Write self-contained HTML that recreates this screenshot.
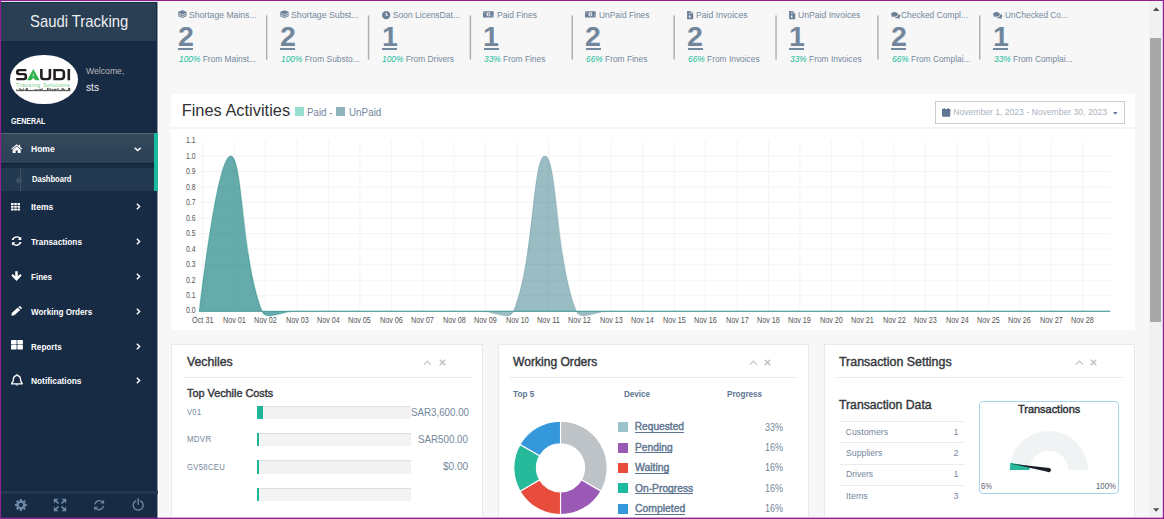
<!DOCTYPE html>
<html><head><meta charset="utf-8"><title>Saudi Tracking</title><style>
html,body{margin:0;padding:0;}
body{width:1164px;height:519px;overflow:hidden;position:relative;font-family:"Liberation Sans",sans-serif;background:#F7F7F7;}
.t{position:absolute;white-space:nowrap;display:block;}
.i{position:absolute;display:block;overflow:visible;}
#frame{position:absolute;left:0;top:0;width:1164px;height:519px;}
#content{position:absolute;left:1px;top:1px;width:1162px;height:517px;background:#F7F7F7;}
#sb{position:absolute;left:1px;top:1px;width:156px;height:517px;}
i{font-style:italic;}
</style></head>
<body>
<div id="frame" style="background:#8F1F93"></div>
<div id="content"></div>
<div id="sb" style="background:#172B44"></div>
<div style="position:absolute;left:1px;top:1px;width:157px;height:1px;background:#DCE3E1"></div>
<div style="position:absolute;left:158px;top:1px;width:1005px;height:1px;background:#F5F8F5"></div>
<div style="position:absolute;left:1px;top:2px;width:156px;height:1px;background:#1D3148"></div>
<div style="position:absolute;left:1px;top:3px;width:155px;height:38px;background:#2A3F54"></div>
<div style="position:absolute;left:157px;top:2px;width:1px;height:516px;background:#8A96A3"></div>
<div style="position:absolute;left:158px;top:2px;width:1px;height:516px;background:#FFFFFF"></div>
<span id="t0" class="t" style="left:30.30px;transform-origin:0 50%;top:14.25px;font-size:15.7px;line-height:15.7px;font-weight:400;color:#ECF0F1;transform:scaleX(0.9462);">Saudi Tracking</span>
<div style="position:absolute;left:9.8px;top:54.6px;width:67.8px;height:49.8px;border-radius:50%;background:#fff"></div>
<svg class="i" style="left:16.10px;top:68.60px" width="54.1" height="11.3" viewBox="0 0 104.5 23" fill="#231F20" preserveAspectRatio="none"><path d="M20 0 H6 C2 0 0 2 0 5.5 V7 C0 10.5 2 12.7 6 12.7 H15 C16 12.7 16.5 13.2 16.5 14.2 V16.5 C16.5 17.6 16 18.3 15 18.3 H0.5 V23 H15.5 C19.5 23 21.5 20.8 21.5 17.3 V14 C21.5 10.5 19.5 8.3 15.5 8.3 H6.5 C5.5 8.3 5 7.8 5 6.8 V6.2 C5 5.2 5.5 4.7 6.5 4.7 H20 Z" fill="#231F20"/><path d="M33.5 0 L45.5 23 H38.2 L33.5 18.2 L28.8 23 H21.5 Z" fill="#2DB24A"/><path d="M33.5 7 L35.6 15.5 H31.4 Z" fill="#fff" opacity=".55"/><path d="M46.5 0 H51.5 V15.5 C51.5 17.5 52.5 18.3 54.5 18.3 H60 C62 18.3 63 17.5 63 15.5 V0 H68 V16.5 C68 20.8 65.5 23 61 23 H53.5 C49 23 46.5 20.8 46.5 16.5 Z" fill="#231F20"/><path d="M72 0 H87 C92 0 95 2.8 95 7.5 V15.5 C95 20.2 92 23 87 23 H72 Z M77 4.7 V18.3 H86.5 C88.8 18.3 90 17.2 90 15 V8 C90 5.8 88.8 4.7 86.5 4.7 Z" fill="#231F20" fill-rule="evenodd"/><rect x="99.5" y="0" width="5" height="23" fill="#231F20"/></svg><span id="t39" class="t" style="left:16.10px;transform-origin:0 50%;top:83.70px;font-size:4.8px;line-height:4.8px;font-weight:400;color:#6CCB7A;transform:scaleX(1.1202);letter-spacing:0.5px;">Tracking Solutions</span><svg class="i" style="left:0;top:0" width="160" height="120" viewBox="0 0 160 120" fill="#2b2b2b" opacity=".8"><rect x="16.3" y="89.9" width="53.8" height="0.9"/><rect x="16.30" y="89.40" width="1.20" height="1.80"/><rect x="18.40" y="90.00" width="0.70" height="1.20"/><rect x="19.35" y="87.90" width="1.20" height="3.30"/><rect x="20.80" y="89.40" width="2.20" height="1.80"/><rect x="23.25" y="88.20" width="0.70" height="3.00"/><rect x="24.85" y="89.40" width="0.70" height="1.80"/><rect x="25.80" y="88.20" width="2.20" height="3.00"/><rect x="28.25" y="90.00" width="2.20" height="1.20"/><rect x="30.80" y="90.00" width="2.20" height="1.20"/><rect x="33.90" y="89.40" width="0.70" height="1.80"/><rect x="34.85" y="89.40" width="2.20" height="1.80"/><rect x="37.55" y="89.40" width="1.60" height="1.80"/><rect x="39.40" y="88.80" width="2.20" height="2.40"/><rect x="41.95" y="87.90" width="0.70" height="3.30"/><rect x="43.00" y="90.00" width="1.20" height="1.20"/><rect x="44.45" y="90.00" width="2.20" height="1.20"/><rect x="47.00" y="87.90" width="1.60" height="3.30"/><rect x="49.50" y="88.20" width="1.20" height="3.00"/><rect x="51.60" y="88.80" width="1.20" height="2.40"/><rect x="53.15" y="89.40" width="0.90" height="1.80"/><rect x="54.30" y="88.80" width="2.20" height="2.40"/><rect x="57.40" y="88.20" width="1.20" height="3.00"/><rect x="59.10" y="90.00" width="2.20" height="1.20"/><rect x="61.55" y="88.20" width="2.20" height="3.00"/><rect x="64.10" y="89.40" width="1.20" height="1.80"/><rect x="66.20" y="90.00" width="1.60" height="1.20"/><rect x="68.05" y="87.90" width="2.20" height="3.30"/></svg>
<span id="t1" class="t" style="left:86.10px;transform-origin:0 50%;top:66.05px;font-size:9.5px;line-height:9.5px;font-weight:400;color:#BAB8B8;transform:scaleX(0.9105);">Welcome,</span>
<span id="t2" class="t" style="left:86.10px;transform-origin:0 50%;top:82.15px;font-size:10.5px;line-height:10.5px;font-weight:400;color:#ECF0F1;transform:scaleX(0.9686);">sts</span>
<span id="t3" class="t" style="left:11.30px;transform-origin:0 50%;top:117.60px;font-size:8.2px;line-height:8.2px;font-weight:700;color:#fff;transform:scaleX(0.8568);">GENERAL</span>
<div style="position:absolute;left:1px;top:132.7px;width:153px;height:30.3px;background:linear-gradient(#36495B,#2C4157);box-shadow:0 1px 0 rgba(0,0,0,.25), inset 0 1px 0 rgba(255,255,255,.16)"></div>
<div style="position:absolute;left:1px;top:167.8px;width:153px;height:23.7px;background:#23394F"></div>
<div style="position:absolute;left:154px;top:132.7px;width:3.5px;height:58.8px;background:#1ABB9C"></div>
<div style="position:absolute;left:19.8px;top:167.8px;width:1px;height:23.7px;background:#3D5166"></div>
<div style="position:absolute;left:16.3px;top:178px;width:5.4px;height:5.4px;border-radius:50%;background:#3D5166"></div>
<svg class="i" style="left:10.70px;top:143.60px" width="11.4" height="9.0" viewBox="0 0 16 13" fill="#fff" preserveAspectRatio="none"><path d="M8 0.3 L0.2 6.9 L1.2 8.1 L8 2.4 L14.8 8.1 L15.8 6.9 L12.9 4.4 V1 H11 V2.8 Z"/><path d="M8 3.6 L2.4 8.3 V13 H6.5 V9.4 H9.5 V13 H13.6 V8.3 Z"/></svg>
<span id="t4" class="t" style="left:31.20px;transform-origin:0 50%;top:144.60px;font-size:9px;line-height:9px;font-weight:700;color:#fff;transform:scaleX(0.9474);">Home</span>
<svg class="i" style="left:134.30px;top:146.90px" width="7.4" height="4.8" viewBox="0 0 10 7" fill="#fff" preserveAspectRatio="none"><path d="M1 1.2 L5 5.2 L9 1.2" fill="none" stroke="#fff" stroke-width="2"/></svg>
<span id="t5" class="t" style="left:31.50px;transform-origin:0 50%;top:175.30px;font-size:9px;line-height:9px;font-weight:700;color:#fff;transform:scaleX(0.8401);">Dashboard</span>
<svg class="i" style="left:10.60px;top:203.00px" width="9.2" height="7.7" viewBox="0 0 14 12" fill="#fff" preserveAspectRatio="none"><rect x="0.0" y="0.0" width="4" height="3.3" rx="0.5"/><rect x="4.9" y="0.0" width="4" height="3.3" rx="0.5"/><rect x="9.8" y="0.0" width="4" height="3.3" rx="0.5"/><rect x="0.0" y="4.2" width="4" height="3.3" rx="0.5"/><rect x="4.9" y="4.2" width="4" height="3.3" rx="0.5"/><rect x="9.8" y="4.2" width="4" height="3.3" rx="0.5"/><rect x="0.0" y="8.4" width="4" height="3.3" rx="0.5"/><rect x="4.9" y="8.4" width="4" height="3.3" rx="0.5"/><rect x="9.8" y="8.4" width="4" height="3.3" rx="0.5"/></svg>
<span id="t6" class="t" style="left:31.20px;transform-origin:0 50%;top:203.30px;font-size:9px;line-height:9px;font-weight:700;color:#fff;transform:scaleX(0.9441);">Items</span>
<svg class="i" style="left:135.80px;top:203.40px" width="4.9" height="7" viewBox="0 0 7 10" fill="#fff" preserveAspectRatio="none"><path d="M1.2 1 L5.2 5 L1.2 9" fill="none" stroke="#fff" stroke-width="2"/></svg>
<svg class="i" style="left:10.60px;top:235.60px" width="11.2" height="10.2" viewBox="0 0 14 14" fill="#fff" preserveAspectRatio="none"><path d="M12.9 1 V5.4 H8.5 L10.2 3.7 A3.9 3.9 0 0 0 3.3 5.6 H0.8 A6.4 6.4 0 0 1 11.7 2.2 Z"/><path d="M1.1 13 V8.6 H5.5 L3.8 10.3 A3.9 3.9 0 0 0 10.7 8.4 H13.2 A6.4 6.4 0 0 1 2.3 11.8 Z"/></svg>
<span id="t7" class="t" style="left:31.20px;transform-origin:0 50%;top:238.00px;font-size:9px;line-height:9px;font-weight:700;color:#fff;transform:scaleX(0.9184);">Transactions</span>
<svg class="i" style="left:135.80px;top:238.10px" width="4.9" height="7" viewBox="0 0 7 10" fill="#fff" preserveAspectRatio="none"><path d="M1.2 1 L5.2 5 L1.2 9" fill="none" stroke="#fff" stroke-width="2"/></svg>
<svg class="i" style="left:11.20px;top:270.90px" width="11" height="10.4" viewBox="0 0 14 13" fill="#fff" preserveAspectRatio="none"><path d="M5.4 0.4 H8.6 V6.6 L11.6 3.7 L13.6 5.7 L7 12.6 L0.4 5.7 L2.4 3.7 L5.4 6.6 Z"/></svg>
<span id="t8" class="t" style="left:31.20px;transform-origin:0 50%;top:272.80px;font-size:9px;line-height:9px;font-weight:700;color:#fff;transform:scaleX(0.8930);">Fines</span>
<svg class="i" style="left:135.80px;top:272.90px" width="4.9" height="7" viewBox="0 0 7 10" fill="#fff" preserveAspectRatio="none"><path d="M1.2 1 L5.2 5 L1.2 9" fill="none" stroke="#fff" stroke-width="2"/></svg>
<svg class="i" style="left:10.60px;top:305.50px" width="11" height="10.1" viewBox="0 0 14 14" fill="#fff" preserveAspectRatio="none"><path d="M0.5 13.5 L1 9.8 L8.6 2.2 L11.8 5.4 L4.2 13 Z M9.5 1.3 L10.4 0.4 A1 1 0 0 1 11.8 0.4 L13.6 2.2 A1 1 0 0 1 13.6 3.6 L12.7 4.5 Z"/></svg>
<span id="t9" class="t" style="left:31.20px;transform-origin:0 50%;top:307.60px;font-size:9px;line-height:9px;font-weight:700;color:#fff;transform:scaleX(0.9033);">Working Orders</span>
<svg class="i" style="left:135.80px;top:307.70px" width="4.9" height="7" viewBox="0 0 7 10" fill="#fff" preserveAspectRatio="none"><path d="M1.2 1 L5.2 5 L1.2 9" fill="none" stroke="#fff" stroke-width="2"/></svg>
<svg class="i" style="left:10.60px;top:340.00px" width="12.1" height="9.7" viewBox="0 0 14 12" fill="#fff" preserveAspectRatio="none"><rect x="0.0" y="0.0" width="6.5" height="5.5" rx="0.5"/><rect x="7.3" y="0.0" width="6.5" height="5.5" rx="0.5"/><rect x="0.0" y="6.3" width="6.5" height="5.5" rx="0.5"/><rect x="7.3" y="6.3" width="6.5" height="5.5" rx="0.5"/></svg>
<span id="t10" class="t" style="left:31.20px;transform-origin:0 50%;top:342.50px;font-size:9px;line-height:9px;font-weight:700;color:#fff;transform:scaleX(0.9025);">Reports</span>
<svg class="i" style="left:135.80px;top:342.60px" width="4.9" height="7" viewBox="0 0 7 10" fill="#fff" preserveAspectRatio="none"><path d="M1.2 1 L5.2 5 L1.2 9" fill="none" stroke="#fff" stroke-width="2"/></svg>
<svg class="i" style="left:11.20px;top:374.10px" width="11.9" height="12.2" viewBox="0 0 14 15" fill="#fff" preserveAspectRatio="none"><path d="M7 1 C7.6 1 7.9 1.4 7.9 1.9 C10.2 2.4 11.2 4.3 11.2 6.5 C11.2 9.3 12 10.6 13.2 11.6 V12.2 H0.8 V11.6 C2 10.6 2.8 9.3 2.8 6.5 C2.8 4.3 3.8 2.4 6.1 1.9 C6.1 1.4 6.4 1 7 1 Z" fill="none" stroke="#fff" stroke-width="1.6" stroke-linejoin="round"/><path d="M5.2 13 A1.9 1.9 0 0 0 8.8 13 Z"/></svg>
<span id="t11" class="t" style="left:31.20px;transform-origin:0 50%;top:377.30px;font-size:9px;line-height:9px;font-weight:700;color:#fff;transform:scaleX(0.9263);">Notifications</span>
<svg class="i" style="left:135.80px;top:377.40px" width="4.9" height="7" viewBox="0 0 7 10" fill="#fff" preserveAspectRatio="none"><path d="M1.2 1 L5.2 5 L1.2 9" fill="none" stroke="#fff" stroke-width="2"/></svg>
<div style="position:absolute;left:1px;top:491px;width:156.5px;height:3px;background:#22384F"></div>
<svg class="i" style="left:0;top:0" width="160" height="519" viewBox="0 0 160 519"><path fill-rule="evenodd" fill="#6F8AA8" d="M26.81,503.98 L26.81,506.02 L25.18,506.18 L24.76,507.19 L25.80,508.46 L24.36,509.90 L23.09,508.86 L22.08,509.28 L21.92,510.91 L19.88,510.91 L19.72,509.28 L18.71,508.86 L17.44,509.90 L16.00,508.46 L17.04,507.19 L16.62,506.18 L14.99,506.02 L14.99,503.98 L16.62,503.82 L17.04,502.81 L16.00,501.54 L17.44,500.10 L18.71,501.14 L19.72,500.72 L19.88,499.09 L21.92,499.09 L22.08,500.72 L23.09,501.14 L24.36,500.10 L25.80,501.54 L24.76,502.81 L25.18,503.82 Z M23.06,505.0 A2.16,2.16 0 1 0 18.74,505.0 A2.16,2.16 0 1 0 23.06,505.0 Z"/></svg><svg class="i" style="left:0;top:0" width="160" height="519" viewBox="0 0 160 519"><path d="M53.8,498.8 L58.4,498.8 L53.8,503.40000000000003 Z" fill="#6F8AA8"/><path d="M55.0,500.0 L58.5,503.5" stroke="#6F8AA8" stroke-width="1.7"/><path d="M66.2,498.8 L61.6,498.8 L66.2,503.40000000000003 Z" fill="#6F8AA8"/><path d="M65.0,500.0 L61.5,503.5" stroke="#6F8AA8" stroke-width="1.7"/><path d="M53.8,511.2 L58.4,511.2 L53.8,506.59999999999997 Z" fill="#6F8AA8"/><path d="M55.0,510.0 L58.5,506.5" stroke="#6F8AA8" stroke-width="1.7"/><path d="M66.2,511.2 L61.6,511.2 L66.2,506.59999999999997 Z" fill="#6F8AA8"/><path d="M65.0,510.0 L61.5,506.5" stroke="#6F8AA8" stroke-width="1.7"/></svg><svg class="i" style="left:93.00px;top:498.80px" width="12.4" height="12.4" viewBox="0 0 14 14" fill="#6F8AA8" ><path d="M2.2 6.2 A4.9 4.9 0 0 1 10.6 3.4" fill="none" stroke="#6F8AA8" stroke-width="1.5"/><path d="M12.6 0.9 V5.2 H8.3 Z"/><path d="M11.8 7.8 A4.9 4.9 0 0 1 3.4 10.6" fill="none" stroke="#6F8AA8" stroke-width="1.5"/><path d="M1.4 13.1 V8.8 H5.7 Z"/></svg><svg class="i" style="left:132.20px;top:498.40px" width="12.4" height="12.8" viewBox="0 0 14 14.5" fill="#6F8AA8" ><path d="M4.3 3.2 A5.6 5.6 0 1 0 9.7 3.2" fill="none" stroke="#6F8AA8" stroke-width="1.5" stroke-linecap="round"/><path d="M7 0.8 V7" stroke="#6F8AA8" stroke-width="1.6" stroke-linecap="round"/></svg>
<svg class="i" style="left:177.80px;top:10.30px" width="8.8" height="8.2" viewBox="0 0 18 16" fill="#6B7F96" ><path d="M9 0 L17.5 3.2 V12.6 L9 16 L0.5 12.6 V3.2 Z"/><path d="M1.5 6.6 L9 9.2 L16.5 6.6 M1.5 10.4 L9 13 L16.5 10.4" stroke="#F7F7F7" stroke-width="1.3" fill="none"/></svg>
<span id="t12" class="t" style="left:189.00px;transform-origin:0 50%;top:10.75px;font-size:8.5px;line-height:8.5px;font-weight:400;color:#73879C;transform:scaleX(1.0146);">Shortage Mains...</span>
<span id="t13" class="t" style="left:177.80px;transform-origin:0 50%;top:23.20px;font-size:28px;line-height:28px;font-weight:700;color:#73879C;transform:scaleX(1.0207);">2</span>
<div style="position:absolute;left:178.20px;top:48.2px;width:15px;height:1.9px;background:#73879C"></div>
<span id="t14" class="t" style="left:178.70px;transform-origin:0 50%;top:55.45px;font-size:8.5px;line-height:8.5px;font-weight:400;color:#73879C;transform:scaleX(.984);transform-origin:0 50%;"><i style="color:#1ABB9C">100%</i> From Mainst...</span>
<svg class="i" style="left:0;top:0" width="1164" height="70" viewBox="0 0 1164 70"><rect x="265.97" y="15.4" width="1.4" height="44.2" fill="#A9AEB2"/></svg>
<svg class="i" style="left:279.67px;top:10.30px" width="8.8" height="8.2" viewBox="0 0 18 16" fill="#6B7F96" ><path d="M9 0 L17.5 3.2 V12.6 L9 16 L0.5 12.6 V3.2 Z"/><path d="M1.5 6.6 L9 9.2 L16.5 6.6 M1.5 10.4 L9 13 L16.5 10.4" stroke="#F7F7F7" stroke-width="1.3" fill="none"/></svg>
<span id="t15" class="t" style="left:290.87px;transform-origin:0 50%;top:10.75px;font-size:8.5px;line-height:8.5px;font-weight:400;color:#73879C;transform:scaleX(1.0291);">Shortage Subst...</span>
<span id="t16" class="t" style="left:279.67px;transform-origin:0 50%;top:23.20px;font-size:28px;line-height:28px;font-weight:700;color:#73879C;transform:scaleX(1.0207);">2</span>
<div style="position:absolute;left:280.07px;top:48.2px;width:15px;height:1.9px;background:#73879C"></div>
<span id="t17" class="t" style="left:280.57px;transform-origin:0 50%;top:55.45px;font-size:8.5px;line-height:8.5px;font-weight:400;color:#73879C;transform:scaleX(.984);transform-origin:0 50%;"><i style="color:#1ABB9C">100%</i> From Substo...</span>
<svg class="i" style="left:0;top:0" width="1164" height="70" viewBox="0 0 1164 70"><rect x="367.84" y="15.4" width="1.4" height="44.2" fill="#A9AEB2"/></svg>
<svg class="i" style="left:381.84px;top:10.50px" width="8.3" height="8.3" viewBox="0 0 16 16" fill="#6B7F96" ><circle cx="8" cy="8" r="8"/><path d="M8 3.2 V8.4 H11.4" stroke="#F7F7F7" stroke-width="1.9" fill="none"/></svg>
<span id="t18" class="t" style="left:392.84px;transform-origin:0 50%;top:10.75px;font-size:8.5px;line-height:8.5px;font-weight:400;color:#73879C;">Soon LicensDat...</span>
<span id="t19" class="t" style="left:381.54px;transform-origin:0 50%;top:23.20px;font-size:28px;line-height:28px;font-weight:700;color:#73879C;transform:scaleX(1.0207);">1</span>
<div style="position:absolute;left:381.94px;top:48.2px;width:15px;height:1.9px;background:#73879C"></div>
<span id="t20" class="t" style="left:382.44px;transform-origin:0 50%;top:55.45px;font-size:8.5px;line-height:8.5px;font-weight:400;color:#73879C;transform:scaleX(.984);transform-origin:0 50%;"><i style="color:#1ABB9C">100%</i> From Drivers</span>
<svg class="i" style="left:0;top:0" width="1164" height="70" viewBox="0 0 1164 70"><rect x="469.71" y="15.4" width="1.4" height="44.2" fill="#A9AEB2"/></svg>
<svg class="i" style="left:483.21px;top:11.40px" width="10.7" height="6.6" viewBox="0 0 22 13" fill="#6B7F96" ><rect x="0" y="0" width="22" height="13" rx="1"/><ellipse cx="11" cy="6.5" rx="4" ry="4.6" fill="#F7F7F7" opacity=".85"/><rect x="10.2" y="3.6" width="1.7" height="5.8" fill="#6B7F96"/><circle cx="3" cy="3" r="1.6" fill="#F7F7F7" opacity=".5"/><circle cx="19" cy="10" r="1.6" fill="#F7F7F7" opacity=".5"/></svg>
<span id="t21" class="t" style="left:497.11px;transform-origin:0 50%;top:10.75px;font-size:8.5px;line-height:8.5px;font-weight:400;color:#73879C;transform:scaleX(0.9957);">Paid Fines</span>
<span id="t22" class="t" style="left:483.41px;transform-origin:0 50%;top:23.20px;font-size:28px;line-height:28px;font-weight:700;color:#73879C;transform:scaleX(1.0207);">1</span>
<div style="position:absolute;left:483.81px;top:48.2px;width:15px;height:1.9px;background:#73879C"></div>
<span id="t23" class="t" style="left:484.31px;transform-origin:0 50%;top:55.45px;font-size:8.5px;line-height:8.5px;font-weight:400;color:#73879C;transform:scaleX(.984);transform-origin:0 50%;"><i style="color:#1ABB9C">33%</i> From Fines</span>
<svg class="i" style="left:0;top:0" width="1164" height="70" viewBox="0 0 1164 70"><rect x="571.58" y="15.4" width="1.4" height="44.2" fill="#A9AEB2"/></svg>
<svg class="i" style="left:585.08px;top:11.40px" width="10.7" height="6.6" viewBox="0 0 22 13" fill="#6B7F96" ><rect x="0" y="0" width="22" height="13" rx="1"/><ellipse cx="11" cy="6.5" rx="4" ry="4.6" fill="#F7F7F7" opacity=".85"/><rect x="10.2" y="3.6" width="1.7" height="5.8" fill="#6B7F96"/><circle cx="3" cy="3" r="1.6" fill="#F7F7F7" opacity=".5"/><circle cx="19" cy="10" r="1.6" fill="#F7F7F7" opacity=".5"/></svg>
<span id="t24" class="t" style="left:598.98px;transform-origin:0 50%;top:10.75px;font-size:8.5px;line-height:8.5px;font-weight:400;color:#73879C;transform:scaleX(0.9896);">UnPaid Fines</span>
<span id="t25" class="t" style="left:585.28px;transform-origin:0 50%;top:23.20px;font-size:28px;line-height:28px;font-weight:700;color:#73879C;transform:scaleX(1.0207);">2</span>
<div style="position:absolute;left:585.68px;top:48.2px;width:15px;height:1.9px;background:#73879C"></div>
<span id="t26" class="t" style="left:586.18px;transform-origin:0 50%;top:55.45px;font-size:8.5px;line-height:8.5px;font-weight:400;color:#73879C;transform:scaleX(.984);transform-origin:0 50%;"><i style="color:#1ABB9C">66%</i> From Fines</span>
<svg class="i" style="left:0;top:0" width="1164" height="70" viewBox="0 0 1164 70"><rect x="673.45" y="15.4" width="1.4" height="44.2" fill="#A9AEB2"/></svg>
<svg class="i" style="left:687.10px;top:10.50px" width="6.3" height="8.2" viewBox="0 0 12 16" fill="#6B7F96" ><path d="M0 0 H7.5 L12 4.5 V16 H0 Z"/><path d="M7.6 0 V4.4 H12" fill="none" stroke="#F7F7F7" stroke-width="1"/><path d="M5 2 V10" stroke="#F7F7F7" stroke-width="1.6" stroke-dasharray="1.5 1.2"/><rect x="3.6" y="9.5" width="3" height="3.6" fill="#F7F7F7"/></svg>
<span id="t27" class="t" style="left:696.05px;transform-origin:0 50%;top:10.75px;font-size:8.5px;line-height:8.5px;font-weight:400;color:#73879C;transform:scaleX(1.0205);">Paid Invoices</span>
<span id="t28" class="t" style="left:687.15px;transform-origin:0 50%;top:23.20px;font-size:28px;line-height:28px;font-weight:700;color:#73879C;transform:scaleX(1.0207);">2</span>
<div style="position:absolute;left:687.55px;top:48.2px;width:15px;height:1.9px;background:#73879C"></div>
<span id="t29" class="t" style="left:688.05px;transform-origin:0 50%;top:55.45px;font-size:8.5px;line-height:8.5px;font-weight:400;color:#73879C;transform:scaleX(.984);transform-origin:0 50%;"><i style="color:#1ABB9C">66%</i> From Invoices</span>
<svg class="i" style="left:0;top:0" width="1164" height="70" viewBox="0 0 1164 70"><rect x="775.32" y="15.4" width="1.4" height="44.2" fill="#A9AEB2"/></svg>
<svg class="i" style="left:788.97px;top:10.50px" width="6.3" height="8.2" viewBox="0 0 12 16" fill="#6B7F96" ><path d="M0 0 H7.5 L12 4.5 V16 H0 Z"/><path d="M7.6 0 V4.4 H12" fill="none" stroke="#F7F7F7" stroke-width="1"/><path d="M5 2 V10" stroke="#F7F7F7" stroke-width="1.6" stroke-dasharray="1.5 1.2"/><rect x="3.6" y="9.5" width="3" height="3.6" fill="#F7F7F7"/></svg>
<span id="t30" class="t" style="left:797.92px;transform-origin:0 50%;top:10.75px;font-size:8.5px;line-height:8.5px;font-weight:400;color:#73879C;transform:scaleX(1.0143);">UnPaid Invoices</span>
<span id="t31" class="t" style="left:789.02px;transform-origin:0 50%;top:23.20px;font-size:28px;line-height:28px;font-weight:700;color:#73879C;transform:scaleX(1.0207);">1</span>
<div style="position:absolute;left:789.42px;top:48.2px;width:15px;height:1.9px;background:#73879C"></div>
<span id="t32" class="t" style="left:789.92px;transform-origin:0 50%;top:55.45px;font-size:8.5px;line-height:8.5px;font-weight:400;color:#73879C;transform:scaleX(.984);transform-origin:0 50%;"><i style="color:#1ABB9C">33%</i> From Invoices</span>
<svg class="i" style="left:0;top:0" width="1164" height="70" viewBox="0 0 1164 70"><rect x="877.19" y="15.4" width="1.4" height="44.2" fill="#A9AEB2"/></svg>
<svg class="i" style="left:890.99px;top:11.60px" width="9.4" height="6.9" viewBox="0 0 19 14" fill="#6B7F96" ><path d="M7 0 C11 0 14 2 14 4.7 C14 7.4 11 9.4 7 9.4 C6.2 9.4 5.5 9.3 4.8 9.2 C3.8 10 2.4 10.6 0.8 10.7 C1.6 10 2.1 9.2 2.2 8.3 C0.8 7.4 0 6.1 0 4.7 C0 2 3 0 7 0 Z"/><path d="M15.3 4.2 C17.5 5 19 6.5 19 8.3 C19 9.7 18.2 10.9 16.8 11.8 C16.9 12.7 17.4 13.4 18.2 14 C16.6 13.9 15.3 13.4 14.3 12.6 C13.6 12.8 12.8 12.9 12 12.9 C9.8 12.9 7.9 12.3 6.6 11.2 C11 11.4 15.6 9 15.3 4.2 Z"/></svg>
<span id="t33" class="t" style="left:900.99px;transform-origin:0 50%;top:10.75px;font-size:8.5px;line-height:8.5px;font-weight:400;color:#73879C;transform:scaleX(0.9917);">Checked Compl...</span>
<span id="t34" class="t" style="left:890.89px;transform-origin:0 50%;top:23.20px;font-size:28px;line-height:28px;font-weight:700;color:#73879C;transform:scaleX(1.0207);">2</span>
<div style="position:absolute;left:891.29px;top:48.2px;width:15px;height:1.9px;background:#73879C"></div>
<span id="t35" class="t" style="left:891.79px;transform-origin:0 50%;top:55.45px;font-size:8.5px;line-height:8.5px;font-weight:400;color:#73879C;transform:scaleX(.984);transform-origin:0 50%;"><i style="color:#1ABB9C">66%</i> From Complai...</span>
<svg class="i" style="left:0;top:0" width="1164" height="70" viewBox="0 0 1164 70"><rect x="979.06" y="15.4" width="1.4" height="44.2" fill="#A9AEB2"/></svg>
<svg class="i" style="left:992.86px;top:11.60px" width="9.4" height="6.9" viewBox="0 0 19 14" fill="#6B7F96" ><path d="M7 0 C11 0 14 2 14 4.7 C14 7.4 11 9.4 7 9.4 C6.2 9.4 5.5 9.3 4.8 9.2 C3.8 10 2.4 10.6 0.8 10.7 C1.6 10 2.1 9.2 2.2 8.3 C0.8 7.4 0 6.1 0 4.7 C0 2 3 0 7 0 Z"/><path d="M15.3 4.2 C17.5 5 19 6.5 19 8.3 C19 9.7 18.2 10.9 16.8 11.8 C16.9 12.7 17.4 13.4 18.2 14 C16.6 13.9 15.3 13.4 14.3 12.6 C13.6 12.8 12.8 12.9 12 12.9 C9.8 12.9 7.9 12.3 6.6 11.2 C11 11.4 15.6 9 15.3 4.2 Z"/></svg>
<span id="t36" class="t" style="left:1004.86px;transform-origin:0 50%;top:10.75px;font-size:8.5px;line-height:8.5px;font-weight:400;color:#73879C;transform:scaleX(0.9686);">UnChecked Co...</span>
<span id="t37" class="t" style="left:992.76px;transform-origin:0 50%;top:23.20px;font-size:28px;line-height:28px;font-weight:700;color:#73879C;transform:scaleX(1.0207);">1</span>
<div style="position:absolute;left:993.16px;top:48.2px;width:15px;height:1.9px;background:#73879C"></div>
<span id="t38" class="t" style="left:993.66px;transform-origin:0 50%;top:55.45px;font-size:8.5px;line-height:8.5px;font-weight:400;color:#73879C;transform:scaleX(.984);transform-origin:0 50%;"><i style="color:#1ABB9C">33%</i> From Complai...</span>
<div style="position:absolute;left:171px;top:93.7px;width:964px;height:236.8px;background:#fff"></div>
<div style="position:absolute;left:171px;top:127px;width:964px;height:2px;background:#F3F5F7"></div>
<span id="t40" class="t" style="left:181.70px;transform-origin:0 50%;top:101.60px;font-size:16.4px;line-height:16.4px;font-weight:400;color:#333;">Fines Activities</span>
<div style="position:absolute;left:295.4px;top:107.2px;width:9px;height:9.2px;background:#98DFCF"></div>
<span id="t41" class="t" style="left:307.40px;transform-origin:0 50%;top:106.60px;font-size:10.8px;line-height:10.8px;font-weight:400;color:#73879C;transform:scaleX(0.9001);">Paid -</span>
<div style="position:absolute;left:336.3px;top:107.2px;width:9.2px;height:9.2px;background:#91B3BD"></div>
<span id="t42" class="t" style="left:348.70px;transform-origin:0 50%;top:106.60px;font-size:10.8px;line-height:10.8px;font-weight:400;color:#73879C;transform:scaleX(0.9119);">UnPaid</span>
<div style="position:absolute;left:935px;top:101px;width:190px;height:23px;box-sizing:border-box;border:1px solid #CCC;background:#fff"></div>
<svg class="i" style="left:942.00px;top:108.00px" width="8.3" height="8.8" viewBox="0 0 16 17" fill="#5F7593" ><path d="M0 4 H16 V15.5 A1.5 1.5 0 0 1 14.5 17 H1.5 A1.5 1.5 0 0 1 0 15.5 Z"/><rect x="0" y="2" width="16" height="3.4" rx="1"/><rect x="3" y="0" width="2.4" height="4" rx="1"/><rect x="10.6" y="0" width="2.4" height="4" rx="1"/></svg>
<span id="t43" class="t" style="left:953.20px;transform-origin:0 50%;top:108.10px;font-size:8.6px;line-height:8.6px;font-weight:400;color:#A9B4C0;">November 1, 2023 - November 30, 2023</span>
<svg class="i" style="left:1112.6px;top:111.7px" width="4.6" height="2.8" viewBox="0 0 8 5"><path d="M0 0 L4 5 L8 0 Z" fill="#5F7593"/></svg>
<svg class="i" style="left:0;top:0" width="1164" height="519" viewBox="0 0 1164 519"><path d="M199.2 311.30 H1110.3" stroke="#F4F4F4" stroke-width="1"/><path d="M199.2 295.77 H1110.3" stroke="#F4F4F4" stroke-width="1"/><path d="M199.2 280.24 H1110.3" stroke="#F4F4F4" stroke-width="1"/><path d="M199.2 264.71 H1110.3" stroke="#F4F4F4" stroke-width="1"/><path d="M199.2 249.18 H1110.3" stroke="#F4F4F4" stroke-width="1"/><path d="M199.2 233.65 H1110.3" stroke="#F4F4F4" stroke-width="1"/><path d="M199.2 218.12 H1110.3" stroke="#F4F4F4" stroke-width="1"/><path d="M199.2 202.59 H1110.3" stroke="#F4F4F4" stroke-width="1"/><path d="M199.2 187.06 H1110.3" stroke="#F4F4F4" stroke-width="1"/><path d="M199.2 171.53 H1110.3" stroke="#F4F4F4" stroke-width="1"/><path d="M199.2 156.00 H1110.3" stroke="#F4F4F4" stroke-width="1"/><path d="M202.70 140.5 V311.3" stroke="#F4F4F4" stroke-width="1"/><path d="M234.13 140.5 V311.3" stroke="#F4F4F4" stroke-width="1"/><path d="M265.56 140.5 V311.3" stroke="#F4F4F4" stroke-width="1"/><path d="M296.99 140.5 V311.3" stroke="#F4F4F4" stroke-width="1"/><path d="M328.42 140.5 V311.3" stroke="#F4F4F4" stroke-width="1"/><path d="M359.85 140.5 V311.3" stroke="#F4F4F4" stroke-width="1"/><path d="M391.28 140.5 V311.3" stroke="#F4F4F4" stroke-width="1"/><path d="M422.71 140.5 V311.3" stroke="#F4F4F4" stroke-width="1"/><path d="M454.14 140.5 V311.3" stroke="#F4F4F4" stroke-width="1"/><path d="M485.57 140.5 V311.3" stroke="#F4F4F4" stroke-width="1"/><path d="M517.00 140.5 V311.3" stroke="#F4F4F4" stroke-width="1"/><path d="M548.43 140.5 V311.3" stroke="#F4F4F4" stroke-width="1"/><path d="M579.86 140.5 V311.3" stroke="#F4F4F4" stroke-width="1"/><path d="M611.29 140.5 V311.3" stroke="#F4F4F4" stroke-width="1"/><path d="M642.72 140.5 V311.3" stroke="#F4F4F4" stroke-width="1"/><path d="M674.15 140.5 V311.3" stroke="#F4F4F4" stroke-width="1"/><path d="M705.58 140.5 V311.3" stroke="#F4F4F4" stroke-width="1"/><path d="M737.01 140.5 V311.3" stroke="#F4F4F4" stroke-width="1"/><path d="M768.44 140.5 V311.3" stroke="#F4F4F4" stroke-width="1"/><path d="M799.87 140.5 V311.3" stroke="#F4F4F4" stroke-width="1"/><path d="M831.30 140.5 V311.3" stroke="#F4F4F4" stroke-width="1"/><path d="M862.73 140.5 V311.3" stroke="#F4F4F4" stroke-width="1"/><path d="M894.16 140.5 V311.3" stroke="#F4F4F4" stroke-width="1"/><path d="M925.59 140.5 V311.3" stroke="#F4F4F4" stroke-width="1"/><path d="M957.02 140.5 V311.3" stroke="#F4F4F4" stroke-width="1"/><path d="M988.45 140.5 V311.3" stroke="#F4F4F4" stroke-width="1"/><path d="M1019.88 140.5 V311.3" stroke="#F4F4F4" stroke-width="1"/><path d="M1051.31 140.5 V311.3" stroke="#F4F4F4" stroke-width="1"/><path d="M1082.74 140.5 V311.3" stroke="#F4F4F4" stroke-width="1"/><clipPath id="cp"><rect x="199.0" y="130" width="911.3" height="195"/></clipPath><g clip-path="url(#cp)"><path d="M199.20 311.30 Q218.06 156.00 230.63 156.00 C243.20 156.00 241.08 259.46 262.06 311.30 C266.22 321.58 280.92 311.30 293.49 311.30 C306.06 311.30 312.35 311.30 324.92 311.30 C337.49 311.30 343.78 311.30 356.35 311.30 C368.92 311.30 375.21 311.30 387.78 311.30 C400.35 311.30 406.64 311.30 419.21 311.30 C431.78 311.30 438.07 311.30 450.64 311.30 C463.21 311.30 469.50 311.30 482.07 311.30 C494.64 311.30 500.93 311.30 513.50 311.30 C526.07 311.30 532.36 311.30 544.93 311.30 C557.50 311.30 563.79 311.30 576.36 311.30 C588.93 311.30 595.22 311.30 607.79 311.30 C620.36 311.30 626.65 311.30 639.22 311.30 C651.79 311.30 658.08 311.30 670.65 311.30 C683.22 311.30 689.51 311.30 702.08 311.30 C714.65 311.30 720.94 311.30 733.51 311.30 C746.08 311.30 752.37 311.30 764.94 311.30 C777.51 311.30 783.80 311.30 796.37 311.30 C808.94 311.30 815.23 311.30 827.80 311.30 C840.37 311.30 846.66 311.30 859.23 311.30 C871.80 311.30 878.09 311.30 890.66 311.30 C903.23 311.30 909.52 311.30 922.09 311.30 C934.66 311.30 940.95 311.30 953.52 311.30 C966.09 311.30 972.38 311.30 984.95 311.30 C997.52 311.30 1003.81 311.30 1016.38 311.30 C1028.95 311.30 1035.24 311.30 1047.81 311.30 C1060.38 311.30 1066.67 311.30 1079.24 311.30 Q1091.81 311.30 1110.67 311.30 L1110.7 311.3 L199.2 311.3 Z" fill="rgb(38,185,154)" fill-opacity=".4"/><path d="M199.20 311.30 Q218.06 156.00 230.63 156.00 C243.20 156.00 241.08 259.46 262.06 311.30 C266.22 321.58 280.92 311.30 293.49 311.30 C306.06 311.30 312.35 311.30 324.92 311.30 C337.49 311.30 343.78 311.30 356.35 311.30 C368.92 311.30 375.21 311.30 387.78 311.30 C400.35 311.30 406.64 311.30 419.21 311.30 C431.78 311.30 438.07 311.30 450.64 311.30 C463.21 311.30 469.50 311.30 482.07 311.30 C494.64 311.30 500.93 311.30 513.50 311.30 C526.07 311.30 532.36 311.30 544.93 311.30 C557.50 311.30 563.79 311.30 576.36 311.30 C588.93 311.30 595.22 311.30 607.79 311.30 C620.36 311.30 626.65 311.30 639.22 311.30 C651.79 311.30 658.08 311.30 670.65 311.30 C683.22 311.30 689.51 311.30 702.08 311.30 C714.65 311.30 720.94 311.30 733.51 311.30 C746.08 311.30 752.37 311.30 764.94 311.30 C777.51 311.30 783.80 311.30 796.37 311.30 C808.94 311.30 815.23 311.30 827.80 311.30 C840.37 311.30 846.66 311.30 859.23 311.30 C871.80 311.30 878.09 311.30 890.66 311.30 C903.23 311.30 909.52 311.30 922.09 311.30 C934.66 311.30 940.95 311.30 953.52 311.30 C966.09 311.30 972.38 311.30 984.95 311.30 C997.52 311.30 1003.81 311.30 1016.38 311.30 C1028.95 311.30 1035.24 311.30 1047.81 311.30 C1060.38 311.30 1066.67 311.30 1079.24 311.30 Q1091.81 311.30 1110.67 311.30" fill="none" stroke="rgb(38,185,154)" stroke-opacity=".25" stroke-width="1.2"/><path d="M199.20 311.30 Q218.06 156.00 230.63 156.00 C243.20 156.00 241.08 259.46 262.06 311.30 C266.22 321.58 280.92 311.30 293.49 311.30 C306.06 311.30 312.35 311.30 324.92 311.30 C337.49 311.30 343.78 311.30 356.35 311.30 C368.92 311.30 375.21 311.30 387.78 311.30 C400.35 311.30 406.64 311.30 419.21 311.30 C431.78 311.30 438.07 311.30 450.64 311.30 C463.21 311.30 469.50 311.30 482.07 311.30 C494.64 311.30 509.34 321.58 513.50 311.30 C534.48 259.46 532.36 156.00 544.93 156.00 C557.50 156.00 555.38 259.46 576.36 311.30 C580.52 321.58 595.22 311.30 607.79 311.30 C620.36 311.30 626.65 311.30 639.22 311.30 C651.79 311.30 658.08 311.30 670.65 311.30 C683.22 311.30 689.51 311.30 702.08 311.30 C714.65 311.30 720.94 311.30 733.51 311.30 C746.08 311.30 752.37 311.30 764.94 311.30 C777.51 311.30 783.80 311.30 796.37 311.30 C808.94 311.30 815.23 311.30 827.80 311.30 C840.37 311.30 846.66 311.30 859.23 311.30 C871.80 311.30 878.09 311.30 890.66 311.30 C903.23 311.30 909.52 311.30 922.09 311.30 C934.66 311.30 940.95 311.30 953.52 311.30 C966.09 311.30 972.38 311.30 984.95 311.30 C997.52 311.30 1003.81 311.30 1016.38 311.30 C1028.95 311.30 1035.24 311.30 1047.81 311.30 C1060.38 311.30 1066.67 311.30 1079.24 311.30 Q1091.81 311.30 1110.67 311.30 L1110.7 311.3 L199.2 311.3 Z" fill="rgb(3,88,106)" fill-opacity=".4"/><path d="M199.20 311.30 Q218.06 156.00 230.63 156.00 C243.20 156.00 241.08 259.46 262.06 311.30 C266.22 321.58 280.92 311.30 293.49 311.30 C306.06 311.30 312.35 311.30 324.92 311.30 C337.49 311.30 343.78 311.30 356.35 311.30 C368.92 311.30 375.21 311.30 387.78 311.30 C400.35 311.30 406.64 311.30 419.21 311.30 C431.78 311.30 438.07 311.30 450.64 311.30 C463.21 311.30 469.50 311.30 482.07 311.30 C494.64 311.30 509.34 321.58 513.50 311.30 C534.48 259.46 532.36 156.00 544.93 156.00 C557.50 156.00 555.38 259.46 576.36 311.30 C580.52 321.58 595.22 311.30 607.79 311.30 C620.36 311.30 626.65 311.30 639.22 311.30 C651.79 311.30 658.08 311.30 670.65 311.30 C683.22 311.30 689.51 311.30 702.08 311.30 C714.65 311.30 720.94 311.30 733.51 311.30 C746.08 311.30 752.37 311.30 764.94 311.30 C777.51 311.30 783.80 311.30 796.37 311.30 C808.94 311.30 815.23 311.30 827.80 311.30 C840.37 311.30 846.66 311.30 859.23 311.30 C871.80 311.30 878.09 311.30 890.66 311.30 C903.23 311.30 909.52 311.30 922.09 311.30 C934.66 311.30 940.95 311.30 953.52 311.30 C966.09 311.30 972.38 311.30 984.95 311.30 C997.52 311.30 1003.81 311.30 1016.38 311.30 C1028.95 311.30 1035.24 311.30 1047.81 311.30 C1060.38 311.30 1066.67 311.30 1079.24 311.30 Q1091.81 311.30 1110.67 311.30" fill="none" stroke="rgb(3,88,106)" stroke-opacity=".14" stroke-width="1.2"/><path d="M199.0 311.4 H1110.3" stroke="rgb(62,148,150)" stroke-opacity=".7" stroke-width="1.3"/></g></svg>
<span id="t44" class="t" style="left:185.70px;transform-origin:0 50%;top:306.70px;font-size:8.2px;line-height:8.2px;font-weight:400;color:#545454;transform:scaleX(0.8340);">0.0</span>
<span id="t45" class="t" style="left:185.70px;transform-origin:0 50%;top:292.37px;font-size:8.2px;line-height:8.2px;font-weight:400;color:#545454;transform:scaleX(0.8340);">0.1</span>
<span id="t46" class="t" style="left:185.70px;transform-origin:0 50%;top:276.84px;font-size:8.2px;line-height:8.2px;font-weight:400;color:#545454;transform:scaleX(0.8340);">0.2</span>
<span id="t47" class="t" style="left:185.70px;transform-origin:0 50%;top:261.31px;font-size:8.2px;line-height:8.2px;font-weight:400;color:#545454;transform:scaleX(0.8340);">0.3</span>
<span id="t48" class="t" style="left:185.70px;transform-origin:0 50%;top:245.78px;font-size:8.2px;line-height:8.2px;font-weight:400;color:#545454;transform:scaleX(0.8340);">0.4</span>
<span id="t49" class="t" style="left:185.70px;transform-origin:0 50%;top:230.25px;font-size:8.2px;line-height:8.2px;font-weight:400;color:#545454;transform:scaleX(0.8340);">0.5</span>
<span id="t50" class="t" style="left:185.70px;transform-origin:0 50%;top:214.72px;font-size:8.2px;line-height:8.2px;font-weight:400;color:#545454;transform:scaleX(0.8340);">0.6</span>
<span id="t51" class="t" style="left:185.70px;transform-origin:0 50%;top:199.19px;font-size:8.2px;line-height:8.2px;font-weight:400;color:#545454;transform:scaleX(0.8340);">0.7</span>
<span id="t52" class="t" style="left:185.70px;transform-origin:0 50%;top:183.66px;font-size:8.2px;line-height:8.2px;font-weight:400;color:#545454;transform:scaleX(0.8340);">0.8</span>
<span id="t53" class="t" style="left:185.70px;transform-origin:0 50%;top:168.13px;font-size:8.2px;line-height:8.2px;font-weight:400;color:#545454;transform:scaleX(0.8340);">0.9</span>
<span id="t54" class="t" style="left:185.70px;transform-origin:0 50%;top:152.60px;font-size:8.2px;line-height:8.2px;font-weight:400;color:#545454;transform:scaleX(0.8340);">1.0</span>
<span id="t55" class="t" style="left:185.70px;transform-origin:0 50%;top:137.07px;font-size:8.2px;line-height:8.2px;font-weight:400;color:#545454;transform:scaleX(0.8340);">1.1</span>
<span id="t56" class="t" style="left:192.10px;transform-origin:0 50%;top:315.90px;font-size:8.4px;line-height:8.4px;font-weight:400;color:#545454;transform:scaleX(0.8755);">Oct 31</span>
<span id="t57" class="t" style="left:222.73px;transform-origin:0 50%;top:315.90px;font-size:8.4px;line-height:8.4px;font-weight:400;color:#545454;transform:scaleX(0.8589);">Nov 01</span>
<span id="t58" class="t" style="left:254.16px;transform-origin:0 50%;top:315.90px;font-size:8.4px;line-height:8.4px;font-weight:400;color:#545454;transform:scaleX(0.8589);">Nov 02</span>
<span id="t59" class="t" style="left:285.59px;transform-origin:0 50%;top:315.90px;font-size:8.4px;line-height:8.4px;font-weight:400;color:#545454;transform:scaleX(0.8589);">Nov 03</span>
<span id="t60" class="t" style="left:317.02px;transform-origin:0 50%;top:315.90px;font-size:8.4px;line-height:8.4px;font-weight:400;color:#545454;transform:scaleX(0.8589);">Nov 04</span>
<span id="t61" class="t" style="left:348.45px;transform-origin:0 50%;top:315.90px;font-size:8.4px;line-height:8.4px;font-weight:400;color:#545454;transform:scaleX(0.8589);">Nov 05</span>
<span id="t62" class="t" style="left:379.88px;transform-origin:0 50%;top:315.90px;font-size:8.4px;line-height:8.4px;font-weight:400;color:#545454;transform:scaleX(0.8589);">Nov 06</span>
<span id="t63" class="t" style="left:411.31px;transform-origin:0 50%;top:315.90px;font-size:8.4px;line-height:8.4px;font-weight:400;color:#545454;transform:scaleX(0.8589);">Nov 07</span>
<span id="t64" class="t" style="left:442.74px;transform-origin:0 50%;top:315.90px;font-size:8.4px;line-height:8.4px;font-weight:400;color:#545454;transform:scaleX(0.8589);">Nov 08</span>
<span id="t65" class="t" style="left:474.17px;transform-origin:0 50%;top:315.90px;font-size:8.4px;line-height:8.4px;font-weight:400;color:#545454;transform:scaleX(0.8589);">Nov 09</span>
<span id="t66" class="t" style="left:505.60px;transform-origin:0 50%;top:315.90px;font-size:8.4px;line-height:8.4px;font-weight:400;color:#545454;transform:scaleX(0.8589);">Nov 10</span>
<span id="t67" class="t" style="left:537.03px;transform-origin:0 50%;top:315.90px;font-size:8.4px;line-height:8.4px;font-weight:400;color:#545454;transform:scaleX(0.8796);">Nov 11</span>
<span id="t68" class="t" style="left:568.46px;transform-origin:0 50%;top:315.90px;font-size:8.4px;line-height:8.4px;font-weight:400;color:#545454;transform:scaleX(0.8589);">Nov 12</span>
<span id="t69" class="t" style="left:599.89px;transform-origin:0 50%;top:315.90px;font-size:8.4px;line-height:8.4px;font-weight:400;color:#545454;transform:scaleX(0.8589);">Nov 13</span>
<span id="t70" class="t" style="left:631.32px;transform-origin:0 50%;top:315.90px;font-size:8.4px;line-height:8.4px;font-weight:400;color:#545454;transform:scaleX(0.8589);">Nov 14</span>
<span id="t71" class="t" style="left:662.75px;transform-origin:0 50%;top:315.90px;font-size:8.4px;line-height:8.4px;font-weight:400;color:#545454;transform:scaleX(0.8589);">Nov 15</span>
<span id="t72" class="t" style="left:694.18px;transform-origin:0 50%;top:315.90px;font-size:8.4px;line-height:8.4px;font-weight:400;color:#545454;transform:scaleX(0.8589);">Nov 16</span>
<span id="t73" class="t" style="left:725.61px;transform-origin:0 50%;top:315.90px;font-size:8.4px;line-height:8.4px;font-weight:400;color:#545454;transform:scaleX(0.8589);">Nov 17</span>
<span id="t74" class="t" style="left:757.04px;transform-origin:0 50%;top:315.90px;font-size:8.4px;line-height:8.4px;font-weight:400;color:#545454;transform:scaleX(0.8589);">Nov 18</span>
<span id="t75" class="t" style="left:788.47px;transform-origin:0 50%;top:315.90px;font-size:8.4px;line-height:8.4px;font-weight:400;color:#545454;transform:scaleX(0.8589);">Nov 19</span>
<span id="t76" class="t" style="left:819.90px;transform-origin:0 50%;top:315.90px;font-size:8.4px;line-height:8.4px;font-weight:400;color:#545454;transform:scaleX(0.8589);">Nov 20</span>
<span id="t77" class="t" style="left:851.33px;transform-origin:0 50%;top:315.90px;font-size:8.4px;line-height:8.4px;font-weight:400;color:#545454;transform:scaleX(0.8589);">Nov 21</span>
<span id="t78" class="t" style="left:882.76px;transform-origin:0 50%;top:315.90px;font-size:8.4px;line-height:8.4px;font-weight:400;color:#545454;transform:scaleX(0.8589);">Nov 22</span>
<span id="t79" class="t" style="left:914.19px;transform-origin:0 50%;top:315.90px;font-size:8.4px;line-height:8.4px;font-weight:400;color:#545454;transform:scaleX(0.8589);">Nov 23</span>
<span id="t80" class="t" style="left:945.62px;transform-origin:0 50%;top:315.90px;font-size:8.4px;line-height:8.4px;font-weight:400;color:#545454;transform:scaleX(0.8589);">Nov 24</span>
<span id="t81" class="t" style="left:977.05px;transform-origin:0 50%;top:315.90px;font-size:8.4px;line-height:8.4px;font-weight:400;color:#545454;transform:scaleX(0.8589);">Nov 25</span>
<span id="t82" class="t" style="left:1008.48px;transform-origin:0 50%;top:315.90px;font-size:8.4px;line-height:8.4px;font-weight:400;color:#545454;transform:scaleX(0.8589);">Nov 26</span>
<span id="t83" class="t" style="left:1039.91px;transform-origin:0 50%;top:315.90px;font-size:8.4px;line-height:8.4px;font-weight:400;color:#545454;transform:scaleX(0.8589);">Nov 27</span>
<span id="t84" class="t" style="left:1071.34px;transform-origin:0 50%;top:315.90px;font-size:8.4px;line-height:8.4px;font-weight:400;color:#545454;transform:scaleX(0.8589);">Nov 28</span>
<div style="position:absolute;left:171.2px;top:344.3px;width:311.6px;height:173.1px;box-sizing:border-box;background:#fff;border:1px solid #E6E9ED;border-bottom:none"></div>
<div style="position:absolute;left:183.79999999999998px;top:377px;width:287.20000000000005px;height:1.3px;background:#E6E9ED"></div>
<span id="t85" class="t" style="left:186.90px;transform-origin:0 50%;top:355.60px;font-size:12px;line-height:12px;font-weight:400;color:#34383D;transform:scaleX(1.0201);-webkit-text-stroke:0.4px;">Vechiles</span>
<svg class="i" style="left:423.3px;top:359.6px" width="8.8" height="5.4" viewBox="0 0 10 6"><path d="M1 5.2 L5 1.2 L9 5.2" fill="none" stroke="#C5C7CB" stroke-width="1.5"/></svg>
<svg class="i" style="left:438.5px;top:359px" width="7" height="7" viewBox="0 0 8 8"><path d="M1 1 L7 7 M7 1 L1 7" fill="none" stroke="#C5C7CB" stroke-width="1.9"/></svg>
<span id="t86" class="t" style="left:186.80px;transform-origin:0 50%;top:388.80px;font-size:10.4px;line-height:10.4px;font-weight:400;color:#34383D;transform:scaleX(1.0437);-webkit-text-stroke:0.4px;">Top Vechile Costs</span>
<span id="t87" class="t" style="left:187.00px;transform-origin:0 50%;top:408.20px;font-size:8.4px;line-height:8.4px;font-weight:400;color:#73879C;transform:scaleX(0.9107);letter-spacing:.3px;">V01</span>
<div style="position:absolute;left:257px;top:405.9px;width:154px;height:13.3px;background:#F3F3F3;box-shadow:inset 0 1px 1px rgba(0,0,0,.09)"></div>
<div style="position:absolute;left:257px;top:405.9px;width:6.2px;height:13.3px;background:#1EB598"></div>
<span id="t88" class="t" style="left:411.40px;transform-origin:0 50%;top:407.50px;font-size:10px;line-height:10px;font-weight:400;color:#73879C;transform:scaleX(0.9748);">SAR3,600.00</span>
<span id="t89" class="t" style="left:187.00px;transform-origin:0 50%;top:435.30px;font-size:8.4px;line-height:8.4px;font-weight:400;color:#73879C;transform:scaleX(0.9436);letter-spacing:.3px;">MDVR</span>
<div style="position:absolute;left:257px;top:433.0px;width:154px;height:13.3px;background:#F3F3F3;box-shadow:inset 0 1px 1px rgba(0,0,0,.09)"></div>
<div style="position:absolute;left:257px;top:433.0px;width:2.0px;height:13.3px;background:#1EB598"></div>
<span id="t90" class="t" style="left:417.80px;transform-origin:0 50%;top:434.60px;font-size:10px;line-height:10px;font-weight:400;color:#73879C;transform:scaleX(0.9774);">SAR500.00</span>
<span id="t91" class="t" style="left:187.00px;transform-origin:0 50%;top:462.70px;font-size:8.4px;line-height:8.4px;font-weight:400;color:#73879C;transform:scaleX(0.9247);letter-spacing:.3px;">GV58CEU</span>
<div style="position:absolute;left:257px;top:460.4px;width:154px;height:13.3px;background:#F3F3F3;box-shadow:inset 0 1px 1px rgba(0,0,0,.09)"></div>
<div style="position:absolute;left:257px;top:460.4px;width:2.0px;height:13.3px;background:#1EB598"></div>
<span id="t92" class="t" style="left:442.60px;transform-origin:0 50%;top:462.00px;font-size:10px;line-height:10px;font-weight:400;color:#73879C;transform:scaleX(1.0067);">$0.00</span>
<div style="position:absolute;left:257px;top:487.6px;width:154px;height:13.3px;background:#F3F3F3;box-shadow:inset 0 1px 1px rgba(0,0,0,.09)"></div>
<div style="position:absolute;left:257px;top:487.6px;width:2.0px;height:13.3px;background:#1EB598"></div>
<div style="position:absolute;left:497.8px;top:344.3px;width:310.8px;height:173.1px;box-sizing:border-box;background:#fff;border:1px solid #E6E9ED;border-bottom:none"></div>
<div style="position:absolute;left:510.40000000000003px;top:377px;width:286.40000000000003px;height:1.3px;background:#E6E9ED"></div>
<span id="t93" class="t" style="left:513.00px;transform-origin:0 50%;top:355.60px;font-size:12px;line-height:12px;font-weight:400;color:#34383D;transform:scaleX(1.0070);-webkit-text-stroke:0.4px;">Working Orders</span>
<svg class="i" style="left:749.0px;top:359.6px" width="8.8" height="5.4" viewBox="0 0 10 6"><path d="M1 5.2 L5 1.2 L9 5.2" fill="none" stroke="#C5C7CB" stroke-width="1.5"/></svg>
<svg class="i" style="left:764.2px;top:359px" width="7" height="7" viewBox="0 0 8 8"><path d="M1 1 L7 7 M7 1 L1 7" fill="none" stroke="#C5C7CB" stroke-width="1.9"/></svg>
<span id="t94" class="t" style="left:513.00px;transform-origin:0 50%;top:390.30px;font-size:8.8px;line-height:8.8px;font-weight:700;color:#5D7590;transform:scaleX(0.9337);">Top 5</span>
<span id="t95" class="t" style="left:623.70px;transform-origin:0 50%;top:390.30px;font-size:8.8px;line-height:8.8px;font-weight:700;color:#5D7590;transform:scaleX(0.9163);">Device</span>
<span id="t96" class="t" style="left:726.90px;transform-origin:0 50%;top:390.30px;font-size:8.8px;line-height:8.8px;font-weight:700;color:#5D7590;transform:scaleX(0.9203);">Progress</span>
<svg class="i" style="left:0;top:0" width="1164" height="519" viewBox="0 0 1164 519"><path d="M560.50 421.10 A46.7 46.7 0 0 1 600.94 491.15 L581.37 479.85 A24.1 24.1 0 0 0 560.50 443.70 Z" fill="#BDC3C7" stroke="#fff" stroke-width="1.1"/><path d="M600.94 491.15 A46.7 46.7 0 0 1 560.50 514.50 L560.50 491.90 A24.1 24.1 0 0 0 581.37 479.85 Z" fill="#9B59B6" stroke="#fff" stroke-width="1.1"/><path d="M560.50 514.50 A46.7 46.7 0 0 1 520.06 491.15 L539.63 479.85 A24.1 24.1 0 0 0 560.50 491.90 Z" fill="#E74C3C" stroke="#fff" stroke-width="1.1"/><path d="M520.06 491.15 A46.7 46.7 0 0 1 520.06 444.45 L539.63 455.75 A24.1 24.1 0 0 0 539.63 479.85 Z" fill="#26B99A" stroke="#fff" stroke-width="1.1"/><path d="M520.06 444.45 A46.7 46.7 0 0 1 560.50 421.10 L560.50 443.70 A24.1 24.1 0 0 0 539.63 455.75 Z" fill="#3498DB" stroke="#fff" stroke-width="1.1"/></svg>
<div style="position:absolute;left:617.6px;top:422.1px;width:10px;height:10px;background:#9CC2CB"></div>
<span id="t97" class="t" style="left:634.70px;transform-origin:0 50%;top:422.40px;font-size:10.2px;line-height:10.2px;font-weight:400;color:#5D7590;-webkit-text-stroke:0.4px;">Requested</span>
<div style="position:absolute;left:634.7px;top:431.9px;width:49.3px;height:1px;background:#5D7590"></div>
<span id="t98" class="t" style="left:764.50px;transform-origin:0 50%;top:422.50px;font-size:10px;line-height:10px;font-weight:400;color:#73879C;transform:scaleX(0.8993);">33%</span>
<div style="position:absolute;left:617.6px;top:442.5px;width:10px;height:10px;background:#9B59B6"></div>
<span id="t99" class="t" style="left:634.70px;transform-origin:0 50%;top:442.85px;font-size:10.2px;line-height:10.2px;font-weight:400;color:#5D7590;transform:scaleX(1.0056);-webkit-text-stroke:0.4px;">Pending</span>
<div style="position:absolute;left:634.7px;top:452.3px;width:37.6px;height:1px;background:#5D7590"></div>
<span id="t100" class="t" style="left:764.50px;transform-origin:0 50%;top:442.95px;font-size:10px;line-height:10px;font-weight:400;color:#73879C;transform:scaleX(0.8993);">16%</span>
<div style="position:absolute;left:617.6px;top:463.0px;width:10px;height:10px;background:#E74C3C"></div>
<span id="t101" class="t" style="left:634.70px;transform-origin:0 50%;top:463.30px;font-size:10.2px;line-height:10.2px;font-weight:400;color:#5D7590;transform:scaleX(1.0240);-webkit-text-stroke:0.4px;">Waiting</span>
<div style="position:absolute;left:634.7px;top:472.8px;width:34.4px;height:1px;background:#5D7590"></div>
<span id="t102" class="t" style="left:764.50px;transform-origin:0 50%;top:463.40px;font-size:10px;line-height:10px;font-weight:400;color:#73879C;transform:scaleX(0.8993);">16%</span>
<div style="position:absolute;left:617.6px;top:483.4px;width:10px;height:10px;background:#1ABB9C"></div>
<span id="t103" class="t" style="left:634.70px;transform-origin:0 50%;top:483.75px;font-size:10.2px;line-height:10.2px;font-weight:400;color:#5D7590;transform:scaleX(1.0078);-webkit-text-stroke:0.4px;">On-Progress</span>
<div style="position:absolute;left:634.7px;top:493.2px;width:58.2px;height:1px;background:#5D7590"></div>
<span id="t104" class="t" style="left:764.50px;transform-origin:0 50%;top:483.85px;font-size:10px;line-height:10px;font-weight:400;color:#73879C;transform:scaleX(0.8993);">16%</span>
<div style="position:absolute;left:617.6px;top:503.9px;width:10px;height:10px;background:#3498DB"></div>
<span id="t105" class="t" style="left:634.70px;transform-origin:0 50%;top:504.20px;font-size:10.2px;line-height:10.2px;font-weight:400;color:#5D7590;transform:scaleX(1.0207);-webkit-text-stroke:0.4px;">Completed</span>
<div style="position:absolute;left:634.7px;top:513.7px;width:50.3px;height:1px;background:#5D7590"></div>
<span id="t106" class="t" style="left:764.50px;transform-origin:0 50%;top:504.30px;font-size:10px;line-height:10px;font-weight:400;color:#73879C;transform:scaleX(0.8993);">16%</span>
<div style="position:absolute;left:823.6px;top:344.3px;width:311.0px;height:173.1px;box-sizing:border-box;background:#fff;border:1px solid #E6E9ED;border-bottom:none"></div>
<div style="position:absolute;left:836.2px;top:377px;width:286.6px;height:1.3px;background:#E6E9ED"></div>
<span id="t107" class="t" style="left:838.80px;transform-origin:0 50%;top:355.60px;font-size:12px;line-height:12px;font-weight:400;color:#34383D;transform:scaleX(1.0335);-webkit-text-stroke:0.4px;">Transaction Settings</span>
<svg class="i" style="left:1074.8px;top:359.6px" width="8.8" height="5.4" viewBox="0 0 10 6"><path d="M1 5.2 L5 1.2 L9 5.2" fill="none" stroke="#C5C7CB" stroke-width="1.5"/></svg>
<svg class="i" style="left:1090.0px;top:359px" width="7" height="7" viewBox="0 0 8 8"><path d="M1 1 L7 7 M7 1 L1 7" fill="none" stroke="#C5C7CB" stroke-width="1.9"/></svg>
<span id="t108" class="t" style="left:838.80px;transform-origin:0 50%;top:398.80px;font-size:12px;line-height:12px;font-weight:400;color:#34383D;transform:scaleX(1.0183);-webkit-text-stroke:0.4px;">Transaction Data</span>
<div style="position:absolute;left:838.8px;top:421.4px;width:126px;height:1px;background:#EAECEF"></div>
<span id="t109" class="t" style="left:845.60px;transform-origin:0 50%;top:427.90px;font-size:8.8px;line-height:8.8px;font-weight:400;color:#73879C;">Customers</span>
<span id="t110" class="t" style="left:953.40px;transform-origin:0 50%;top:427.90px;font-size:8.8px;line-height:8.8px;font-weight:400;color:#73879C;">1</span>
<div style="position:absolute;left:838.8px;top:442.4px;width:126px;height:1px;background:#EAECEF"></div>
<span id="t111" class="t" style="left:845.60px;transform-origin:0 50%;top:448.90px;font-size:8.8px;line-height:8.8px;font-weight:400;color:#73879C;transform:scaleX(0.9922);">Suppliers</span>
<span id="t112" class="t" style="left:953.40px;transform-origin:0 50%;top:448.90px;font-size:8.8px;line-height:8.8px;font-weight:400;color:#73879C;">2</span>
<div style="position:absolute;left:838.8px;top:463.5px;width:126px;height:1px;background:#EAECEF"></div>
<span id="t113" class="t" style="left:845.60px;transform-origin:0 50%;top:470.00px;font-size:8.8px;line-height:8.8px;font-weight:400;color:#73879C;transform:scaleX(0.9692);">Drivers</span>
<span id="t114" class="t" style="left:953.40px;transform-origin:0 50%;top:470.00px;font-size:8.8px;line-height:8.8px;font-weight:400;color:#73879C;">1</span>
<div style="position:absolute;left:838.8px;top:485.1px;width:126px;height:1px;background:#EAECEF"></div>
<span id="t115" class="t" style="left:845.60px;transform-origin:0 50%;top:491.60px;font-size:8.8px;line-height:8.8px;font-weight:400;color:#73879C;transform:scaleX(1.0132);">Items</span>
<span id="t116" class="t" style="left:953.40px;transform-origin:0 50%;top:491.60px;font-size:8.8px;line-height:8.8px;font-weight:400;color:#73879C;">3</span>
<div style="position:absolute;left:979px;top:401px;width:140px;height:93px;box-sizing:border-box;border:1px solid #A9D4EE;border-radius:4px;background:#fff"></div>
<span id="t117" class="t" style="left:1018.10px;transform-origin:0 50%;top:403.90px;font-size:11px;line-height:11px;font-weight:400;color:#2B2F35;transform:scaleX(0.9942);-webkit-text-stroke:0.4px;">Transactions</span>
<svg class="i" style="left:0;top:0" width="1164" height="519" viewBox="0 0 1164 519"><path d="M1009.80 470.10 A39.1 39.1 0 0 1 1088.00 470.10 L1068.30 470.10 A19.4 19.4 0 0 0 1029.50 470.10 Z" fill="#F0F3F3"/><path d="M1009.80 470.10 A39.1 39.1 0 0 1 1010.49 462.77 L1029.84 466.46 A19.4 19.4 0 0 0 1029.50 470.10 Z" fill="#26B99A"/><path d="M1009.56 463.45 L1049.30 468.00 L1049.70 472.20 Z" fill="#1B2027"/><circle cx="1048.90" cy="470.10" r="2.1" fill="#1B2027"/></svg>
<span id="t118" class="t" style="left:981.10px;transform-origin:0 50%;top:481.70px;font-size:8.6px;line-height:8.6px;font-weight:400;color:#5B626C;transform:scaleX(0.8936);">6%</span>
<span id="t119" class="t" style="left:1096.00px;transform-origin:0 50%;top:481.70px;font-size:8.6px;line-height:8.6px;font-weight:400;color:#5B626C;transform:scaleX(0.9097);">100%</span>
<div style="position:absolute;left:1149px;top:1px;width:14px;height:517px;background:#F1F1F1"></div><div style="position:absolute;left:1150px;top:38px;width:11px;height:284px;background:#A8A8A8"></div><svg class="i" style="left:1152.7px;top:7.4px" width="6.4" height="4.2" viewBox="0 0 8 5"><path d="M0 4.8 L4 0.2 L8 4.8 Z" fill="#505050"/></svg><svg class="i" style="left:1152.7px;top:508.2px" width="6.4" height="4" viewBox="0 0 8 5"><path d="M0 0.2 L4 4.8 L8 0.2 Z" fill="#505050"/></svg><div style="position:absolute;left:0;top:517px;width:1164px;height:1px;background:#8F1F93;opacity:.35"></div><div style="position:absolute;left:1162px;top:0;width:1px;height:519px;background:#8F1F93;opacity:.2"></div>
</body></html>
